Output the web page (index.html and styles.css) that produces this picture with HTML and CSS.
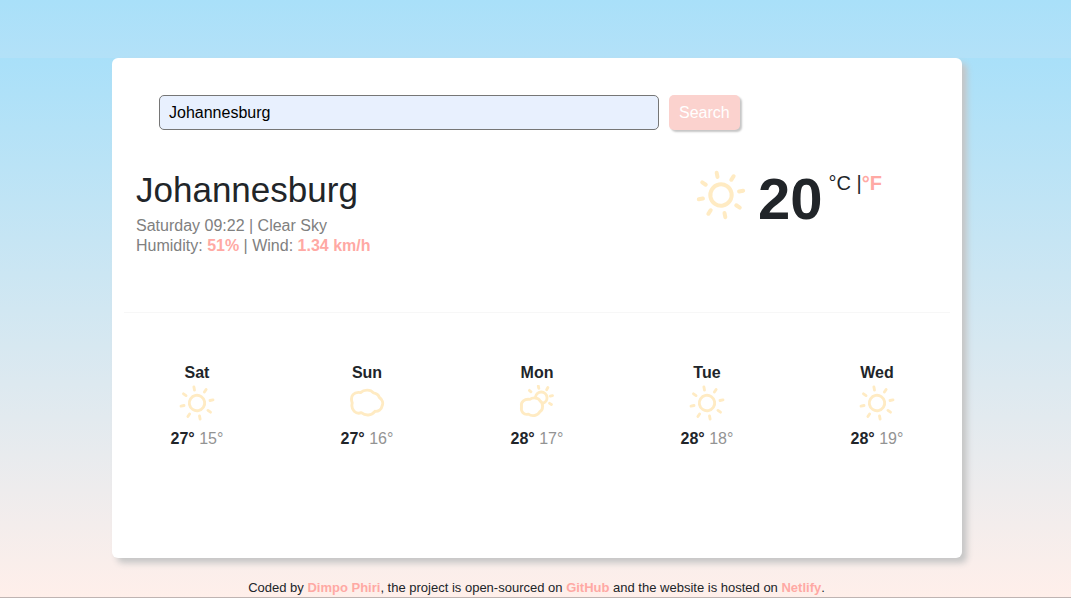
FILE: index.html
```html
<!DOCTYPE html>
<html lang="en">
<head>
<meta charset="utf-8">
<meta name="viewport" content="width=device-width, initial-scale=1">
<title>Weather</title>
<link rel="stylesheet" href="styles.css">
</head>
<body>
<svg class="sprite" aria-hidden="true">
  <symbol id="sun" viewBox="-25 -25 50 50">
    <g transform="rotate(-11)">
      <circle r="10.7"/>
      <path d="M0-18.4V-22.6M0 18.4V22.6M-18.4 0H-22.6M18.4 0H22.6M13-13L16-16M13 13L16 16M-13 13L-16 16M-13-13L-16-16"/>
    </g>
  </symbol>
  <symbol id="cloud" viewBox="-25 -25 50 50">
    <path d="M-20.500 0C-24-10-18-16-9-14.500C-4-19 5-19 9-14C14-13 16-11 17-8C21-5 23 0 21 4C20 9 16 12 11 11.500C6 18-2 18-8 13.500C-15 16-23 10-20.500 0Z"/>
  </symbol>
  <symbol id="partly" viewBox="-25 -25 50 50">
    <path d="M-21.500 5C-23-2-17-6-10-5C-6-8 2-8 4-3C9-1 9 10 4 12C1 18-7 19-12 15.500C-18 17-23 12-21.500 5Z"/>
    <path d="M-2-8.500A8 8 0 1 1 8 0.500M-8.500-15.500L-10.500-17.500M2.500-20.500L1.800-23.500M13.500-18.500L15-21.500M18.500-9.500L21.500-10.200M17.500 0.500L20 2"/>
  </symbol>
</svg>
<main class="app">
  <section class="card">
    <form class="search">
      <input class="search-input" type="text" value="Johannesburg" aria-label="City">
      <button class="search-button" type="button">Search</button>
    </form>
    <div class="current">
      <div class="place">
        <h1 class="city">Johannesburg</h1>
        <p class="meta">Saturday 09:22 | Clear Sky</p>
        <p class="meta">Humidity: <strong class="accent">51%</strong> | Wind: <strong class="accent">1.34 km/h</strong></p>
      </div>
      <div class="now">
        <svg class="icon icon-large"><use href="#sun"/></svg>
        <strong class="degrees">20</strong>
        <span class="units"><a class="unit" href="#">°C</a> |<a class="accent" href="#">°F</a></span>
      </div>
    </div>
    <hr class="divider">
    <div class="forecast">
      <div class="day"><strong>Sat</strong><svg class="icon"><use href="#sun"/></svg><span><strong>27°</strong> <span class="low">15°</span></span></div>
      <div class="day"><strong>Sun</strong><svg class="icon"><use href="#cloud"/></svg><span><strong>27°</strong> <span class="low">16°</span></span></div>
      <div class="day"><strong>Mon</strong><svg class="icon"><use href="#partly"/></svg><span><strong>28°</strong> <span class="low">17°</span></span></div>
      <div class="day"><strong>Tue</strong><svg class="icon"><use href="#sun"/></svg><span><strong>28°</strong> <span class="low">18°</span></span></div>
      <div class="day"><strong>Wed</strong><svg class="icon"><use href="#sun"/></svg><span><strong>28°</strong> <span class="low">19°</span></span></div>
    </div>
  </section>
</main>
<footer class="footer">Coded by <a class="accent" href="#">Dimpo Phiri</a>, the project is open-sourced on <a class="accent" href="#">GitHub</a> and the website is hosted on <a class="accent" href="#">Netlify</a>.</footer>
</body>
</html>
```
FILE: styles.css
```css
* {
  box-sizing: border-box;
}

html {
  min-height: 100%;
  background:
    linear-gradient(#a9e0f9, #b3e1f8) top / 100% 58px no-repeat,
    linear-gradient(#a9e0f9 58px, #ffefea);
}

body {
  display: flex;
  flex-direction: column;
  min-height: 100vh;
  margin: 0;
  border-bottom: 1px solid #bfb4b2;
  font: 16px/20px "Liberation Sans", Arial, sans-serif;
  color: #212529;
}

h1,
p {
  margin: 0;
}

.sprite {
  position: absolute;
  width: 0;
  height: 0;
}

.app {
  padding: 58px 0 0 3px;
}

.card {
  max-width: 850px;
  min-height: 500px;
  margin: 0 auto;
  padding: 37px 12px;
  border-radius: 6px;
  background: #fff;
  box-shadow: 5px 5px 6px #c6c6c6;
}

.search {
  display: flex;
  gap: 10px;
  padding: 0 35px;
}

.search-input {
  flex: 0 1 500px;
  min-width: 0;
  height: 35px;
  padding: 0 9px;
  border: 1px solid #767676;
  border-radius: 5px;
  background: #e8f0fe;
  font: inherit;
  color: #000;
}

.search-button {
  height: 35px;
  padding: 0 10px;
  border: 0;
  border-radius: 5px;
  background: #fbd2ce;
  box-shadow: 2px 2px 2px #c6c6c6;
  font: inherit;
  color: #fff;
}

.current {
  display: flex;
  justify-content: space-between;
  padding: 38px 68px 0 12px;
}

.city {
  margin-bottom: 5px;
  font-size: 35px;
  font-weight: 400;
  line-height: 43px;
}

.meta {
  color: #808080;
}

.accent {
  color: #ffa9a4;
  font-weight: 700;
  text-decoration: none;
}

.now {
  display: flex;
  align-items: flex-start;
}

.icon {
  width: 36px;
  height: 36px;
  fill: none;
  stroke: #ffebc3;
  stroke-width: 4;
  stroke-linecap: round;
  stroke-linejoin: round;
}

.icon-large {
  width: 50px;
  height: 50px;
  margin: 2px 12px 0 0;
}

.degrees {
  margin-right: 6px;
  font-size: 58px;
  line-height: 62px;
}

.units {
  font-size: 20px;
  line-height: 30px;
}

.unit {
  color: inherit;
  text-decoration: none;
}

.divider {
  height: 1px;
  margin: 56px 0 50px;
  border: 0;
  background: #f7f7f7;
}

.forecast {
  display: grid;
  grid-template-columns: repeat(5, 1fr);
  margin: 0 -12px;
}

.day {
  display: flex;
  flex-direction: column;
  align-items: center;
}

.day .icon {
  margin: 2px 0 8px;
}

.low {
  color: #939393;
}

.footer {
  margin-top: 20px;
  padding-left: 2px;
  font-size: 13px;
  line-height: 19px;
  text-align: center;
}
```
